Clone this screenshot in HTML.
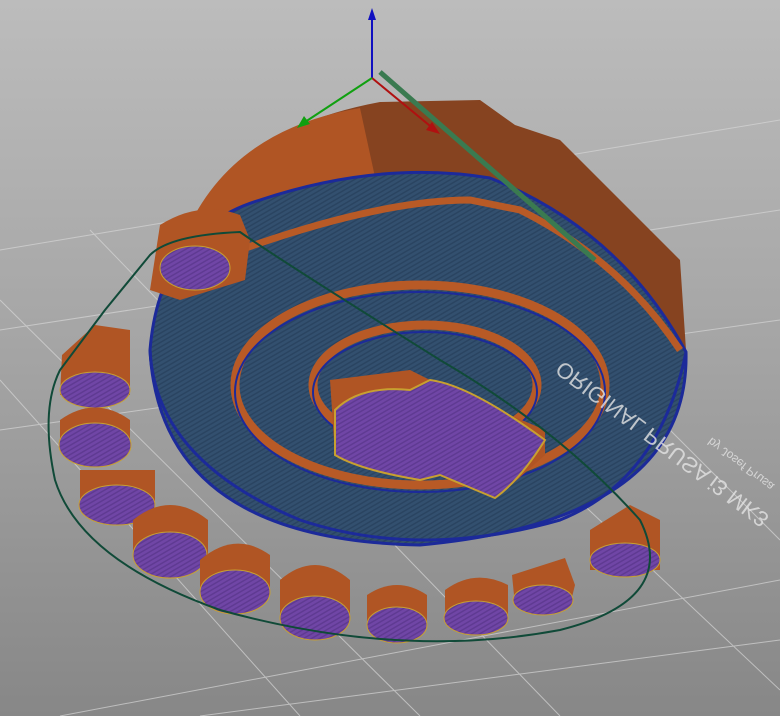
<!DOCTYPE html>
<html><head><meta charset="utf-8"><style>
html,body{margin:0;padding:0;width:780px;height:716px;overflow:hidden}
svg{display:block}
</style></head><body>
<svg width="780" height="716" viewBox="0 0 780 716" xmlns="http://www.w3.org/2000/svg">
<defs>
<linearGradient id="bg" x1="0" y1="0" x2="0" y2="1">
<stop offset="0" stop-color="#bcbcbc"/><stop offset="0.5" stop-color="#a4a4a4"/><stop offset="1" stop-color="#878787"/>
</linearGradient>
<pattern id="stripe" width="4" height="4" patternUnits="userSpaceOnUse" patternTransform="rotate(-30)">
<rect width="4" height="4" fill="#33506f"/><rect width="4" height="1.5" fill="#2a4461"/>
</pattern>
<pattern id="pstripe" width="4" height="4" patternUnits="userSpaceOnUse" patternTransform="rotate(-30)">
<rect width="4" height="4" fill="#7046a6"/><rect width="4" height="1.5" fill="#5f3a92"/>
</pattern>
</defs>
<rect width="780" height="716" fill="url(#bg)"/>
<g stroke="#d6d6d6" stroke-width="1" opacity="0.7" fill="none">
<line x1="0" y1="250" x2="780" y2="120"/>
<line x1="0" y1="330" x2="780" y2="210"/>
<line x1="0" y1="430" x2="780" y2="320"/>
<line x1="60" y1="716" x2="780" y2="580"/>
<line x1="200" y1="716" x2="780" y2="640"/>
<line x1="0" y1="300" x2="420" y2="716"/>
<line x1="90" y1="230" x2="560" y2="716"/>
<line x1="260" y1="200" x2="780" y2="690"/>
<line x1="420" y1="180" x2="780" y2="540"/>
<line x1="0" y1="380" x2="300" y2="716"/>
</g>
<path d="M185 235 Q230 130 380 102 L480 100 L515 125 L560 140 L680 260 L686 350 L560 240 L430 180 L300 200 L220 260 Z" fill="#864320"/>
<path d="M185 235 Q230 130 360 108 L380 200 L260 215 Z" fill="#b05524"/>
<path d="M150 350 Q160 230 260 200 Q380 160 490 178 Q620 230 686 352 Q690 520 420 545 Q160 540 150 350 Z" fill="url(#stripe)" stroke="#1c2a9a" stroke-width="3"/>
<path d="M150 350 Q155 460 300 520 Q420 560 560 520 Q660 480 686 352" fill="none" stroke="#1c2a9a" stroke-width="3"/>
<ellipse cx="420" cy="385" rx="185" ry="100" fill="none" stroke="#b85a26" stroke-width="9"/>
<ellipse cx="420" cy="392" rx="185" ry="100" fill="none" stroke="#1c2a9a" stroke-width="2"/>
<ellipse cx="425" cy="385" rx="112" ry="60" fill="none" stroke="#b85a26" stroke-width="9"/>
<ellipse cx="425" cy="392" rx="112" ry="60" fill="none" stroke="#1c2a9a" stroke-width="2"/>
<path d="M240 250 Q380 200 470 200 L520 210 Q620 260 680 350" fill="none" stroke="#b85a26" stroke-width="7"/>
<path d="M330 380 L410 370 L440 385 L545 430 L545 455 L500 495 L440 475 L400 470 L335 455 Z" fill="#b05524"/>
<path d="M335 410 Q360 385 410 390 L430 380 Q470 385 545 440 Q520 480 495 498 L440 475 L420 480 Q360 470 335 455 Z" fill="url(#pstripe)" stroke="#c8a030" stroke-width="2"/>
<g transform="translate(563,360) rotate(37) scale(1,-1)" font-family="Liberation Sans, sans-serif" fill="#e4e4e4" opacity="0.8">
<text x="0" y="0" font-size="22">ORIGINAL PRUSA i3 MK3</text>
<text x="165" y="28" font-size="12">by Josef Prusa</text>
</g>
<path d="M160 225 Q200 200 240 215 L250 240 L245 280 L180 300 L150 290 Z" fill="#b05524"/>
<ellipse cx="195" cy="268" rx="35" ry="22" fill="url(#pstripe)" stroke="#c8a030"/>
<g>
<path d="M62 355 L95 325 L130 330 L130 395 L60 395 Z" fill="#b05524"/><ellipse cx="95" cy="390" rx="35" ry="18" fill="url(#pstripe)" stroke="#c8a030"/>
<path d="M60 420 Q95 395 130 420 L130 450 L60 450 Z" fill="#b05524"/><ellipse cx="95" cy="445" rx="36" ry="22" fill="url(#pstripe)" stroke="#c8a030"/>
<path d="M80 470 L155 470 L155 505 L80 505 Z" fill="#b05524"/><ellipse cx="117" cy="505" rx="38" ry="20" fill="url(#pstripe)" stroke="#c8a030"/>
<path d="M133 520 Q170 490 208 520 L208 555 L133 555 Z" fill="#b05524"/><ellipse cx="170" cy="555" rx="37" ry="23" fill="url(#pstripe)" stroke="#c8a030"/>
<path d="M200 560 Q235 530 270 555 L270 590 L200 590 Z" fill="#b05524"/><ellipse cx="235" cy="592" rx="35" ry="22" fill="url(#pstripe)" stroke="#c8a030"/>
<path d="M280 580 Q315 550 350 580 L350 615 L280 615 Z" fill="#b05524"/><ellipse cx="315" cy="618" rx="35" ry="22" fill="url(#pstripe)" stroke="#c8a030"/>
<path d="M367 595 Q397 575 427 595 L427 625 L367 625 Z" fill="#b05524"/><ellipse cx="397" cy="625" rx="30" ry="18" fill="url(#pstripe)" stroke="#c8a030"/>
<path d="M445 590 Q475 568 508 585 L508 615 L445 620 Z" fill="#b05524"/><ellipse cx="476" cy="618" rx="32" ry="17" fill="url(#pstripe)" stroke="#c8a030"/>
<path d="M512 575 L565 558 L575 585 L570 605 L515 605 Z" fill="#b05524"/><ellipse cx="543" cy="600" rx="30" ry="15" fill="url(#pstripe)" stroke="#c8a030"/>
<path d="M590 530 L630 505 L660 520 L660 570 L590 570 Z" fill="#b05524"/><ellipse cx="625" cy="560" rx="35" ry="17" fill="url(#pstripe)" stroke="#c8a030"/>
</g>
<path d="M150 255 Q170 235 240 232 Q280 260 440 360 Q560 430 640 520 Q680 600 560 630 Q400 660 220 610 Q80 560 55 480 Q40 410 60 370 L105 310 Z" fill="none" stroke="#104a38" stroke-width="2"/>
<line x1="380" y1="72" x2="595" y2="260" stroke="#3a7a50" stroke-width="5"/>
<line x1="372" y1="78" x2="372" y2="14" stroke="#1010c0" stroke-width="2"/>
<polygon points="372,8 368,20 376,20" fill="#1010c0"/>
<line x1="372" y1="78" x2="435" y2="130" stroke="#b01010" stroke-width="2"/>
<polygon points="440,134 426,130 432,122" fill="#b01010"/>
<line x1="372" y1="78" x2="302" y2="124" stroke="#10a010" stroke-width="2"/>
<polygon points="297,128 304,116 310,124" fill="#10a010"/>
</svg>
</body></html>
